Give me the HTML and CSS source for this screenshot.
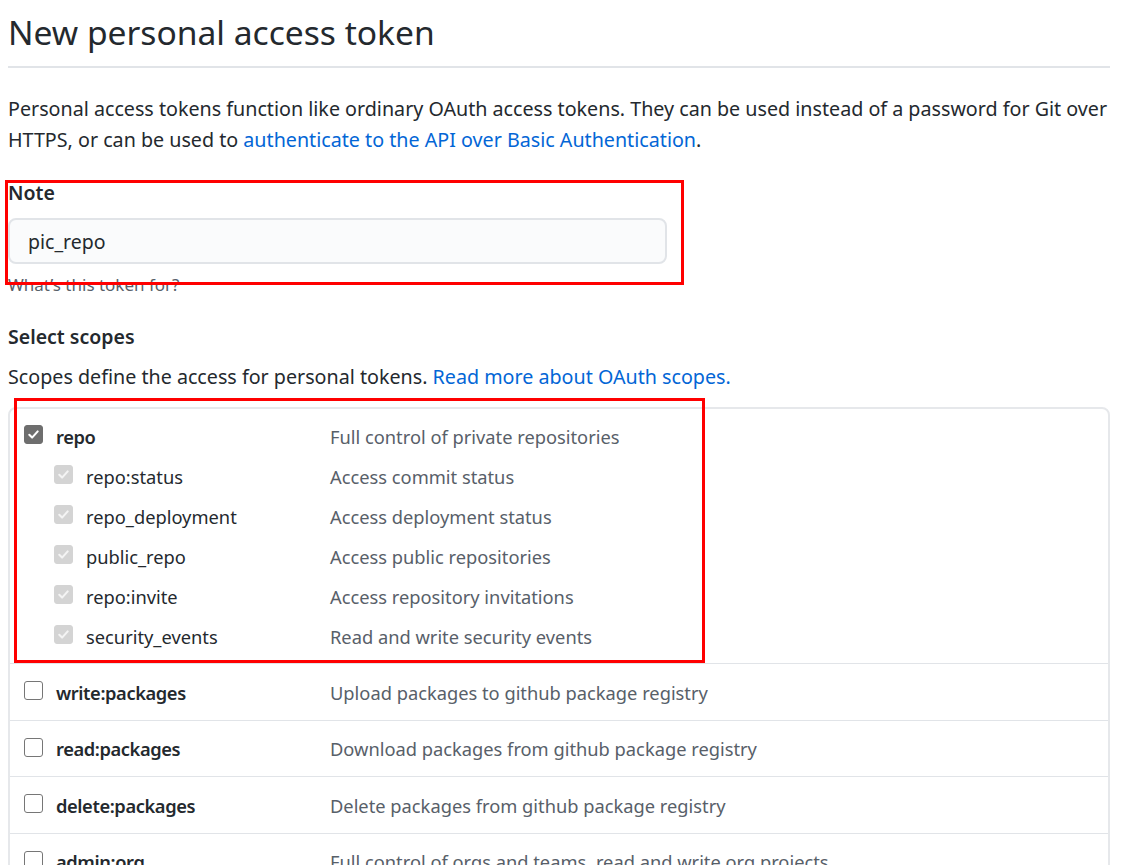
FILE: index.html
```html
<!DOCTYPE html>
<html>
<head>
<meta charset="utf-8">
<link rel="stylesheet" href="styles.css">
</head>
<body>
<div class="page">
  <h1 class="subhead">New personal access token</h1>
  <p class="intro">Personal access tokens function like ordinary OAuth access tokens. They can be used instead of a password for Git over HTTPS, or can be used to <a href="#">authenticate to the API over Basic Authentication</a>.</p>

  <div class="form-group note-group">
    <label class="label">Note</label>
    <input class="input" type="text" value="pic_repo">
    <p class="note">What’s this token for?</p>
    <div class="mark mark-note"></div>
  </div>

  <div class="scopes-head">
    <h3 class="label">Select scopes</h3>
    <p class="scopes-desc">Scopes define the access for personal tokens. <a href="#">Read more about OAuth scopes.</a></p>
  </div>

  <div class="scopes">
    <div class="group repo-group">
      <div class="row">
        <span class="cb checked"><svg viewBox="0 0 16 16"><path d="M3.5 8.3l3 3 6-6.6" /></svg></span>
        <span class="name strong">repo</span>
        <span class="desc">Full control of private repositories</span>
      </div>
      <div class="row sub">
        <span class="cb disabled"><svg viewBox="0 0 16 16"><path d="M3.5 8.3l3 3 6-6.6" /></svg></span>
        <span class="name">repo:status</span>
        <span class="desc">Access commit status</span>
      </div>
      <div class="row sub">
        <span class="cb disabled"><svg viewBox="0 0 16 16"><path d="M3.5 8.3l3 3 6-6.6" /></svg></span>
        <span class="name">repo_deployment</span>
        <span class="desc">Access deployment status</span>
      </div>
      <div class="row sub">
        <span class="cb disabled"><svg viewBox="0 0 16 16"><path d="M3.5 8.3l3 3 6-6.6" /></svg></span>
        <span class="name">public_repo</span>
        <span class="desc">Access public repositories</span>
      </div>
      <div class="row sub">
        <span class="cb disabled"><svg viewBox="0 0 16 16"><path d="M3.5 8.3l3 3 6-6.6" /></svg></span>
        <span class="name">repo:invite</span>
        <span class="desc">Access repository invitations</span>
      </div>
      <div class="row sub">
        <span class="cb disabled"><svg viewBox="0 0 16 16"><path d="M3.5 8.3l3 3 6-6.6" /></svg></span>
        <span class="name">security_events</span>
        <span class="desc">Read and write security events</span>
      </div>
      <div class="mark mark-repo"></div>
    </div>
    <div class="group">
      <div class="row">
        <span class="cb"></span>
        <span class="name strong">write:packages</span>
        <span class="desc">Upload packages to github package registry</span>
      </div>
    </div>
    <div class="group">
      <div class="row">
        <span class="cb"></span>
        <span class="name strong">read:packages</span>
        <span class="desc">Download packages from github package registry</span>
      </div>
    </div>
    <div class="group">
      <div class="row">
        <span class="cb"></span>
        <span class="name strong">delete:packages</span>
        <span class="desc">Delete packages from github package registry</span>
      </div>
    </div>
    <div class="group">
      <div class="row">
        <span class="cb"></span>
        <span class="name strong">admin:org</span>
        <span class="desc">Full control of orgs and teams, read and write org projects</span>
      </div>
    </div>
  </div>
</div>
</body>
</html>
```

FILE: styles.css
```css
* { box-sizing: border-box; }
html, body { margin: 0; padding: 0; background: #fff; }
body {
  font-family: "Noto Sans", "Open Sans", sans-serif;
  color: #24292e;
  font-size: 19.7px;
}
.page {
  width: 1112px;
  padding-left: 8px;
}
.subhead {
  margin: 0 0 0;
  width: 1102px;
  padding-top: 8px;
  padding-bottom: 10px;
  font-size: 33.6px;
  font-weight: 400;
  line-height: 48px;
  border-bottom: 2px solid #e1e4e8;
}
.intro {
  margin: 25px 0 0;
  line-height: 31px;
}
a { color: #0366d6; text-decoration: none; }
.form-group { position: relative; margin-top: 25px; }
.label {
  display: block;
  margin: 0;
  font-size: 19.5px;
  font-weight: 600;
  line-height: 26px;
}
.input {
  display: block;
  margin-top: 12px;
  width: 659px;
  height: 46px;
  padding: 0 18px;
  font: inherit;
  font-size: 19.5px;
  color: #24292e;
  background: #fafbfc;
  border: 2px solid #e1e4e8;
  border-radius: 8px;
  outline: none;
}
.note {
  margin: 11px 0 0;
  font-size: 17px;
  line-height: 20px;
  color: #586069;
}
.mark {
  position: absolute;
  border: 3px solid #ff0000;
  pointer-events: none;
}
.mark-note { left: -3px; top: 0; width: 679px; height: 105px; }
.scopes-head { margin-top: 29px; }
.scopes-desc { margin: 13px 0 0; line-height: 28px; }
.scopes {
  margin-top: 16px;
  width: 1102px;
  border: 2px solid #e6e8eb;
  border-radius: 8px;
}
.group {
  position: relative;
  padding: 8px 14px 7.5px;
  border-top: 1px solid #e1e4e8;
}
.group:first-child { border-top: 0; padding-top: 7px; padding-bottom: 7px; }
.row {
  display: flex;
  align-items: center;
  height: 40px;
  font-size: 18.3px;
}
.cb {
  flex: none;
  width: 19px;
  height: 19px;
  border: 1px solid #767676;
  border-radius: 3px;
  background: #fff;
  margin-right: 13px;
  display: flex;
  align-items: center;
  justify-content: center;
  margin-top: -3px;
}
.cb svg { width: 15px; height: 15px; fill: none; stroke: #fff; stroke-width: 2.2; stroke-linecap: round; stroke-linejoin: round; }
.cb.checked { background: #6e6e6e; border-color: #6e6e6e; }
.cb.disabled { background: #d4d4d4; border-color: #d4d4d4; }
.cb.disabled svg { stroke: #f4f4f4; }
.row.sub { padding-left: 30px; }
.name { width: 274px; flex: none; }
.row.sub .name { width: 244px; }
.name.strong { font-weight: 600; letter-spacing: -0.4px; }
.desc { color: #586069; }
.mark-repo { left: 4px; top: -11px; width: 691px; height: 265px; }
```
